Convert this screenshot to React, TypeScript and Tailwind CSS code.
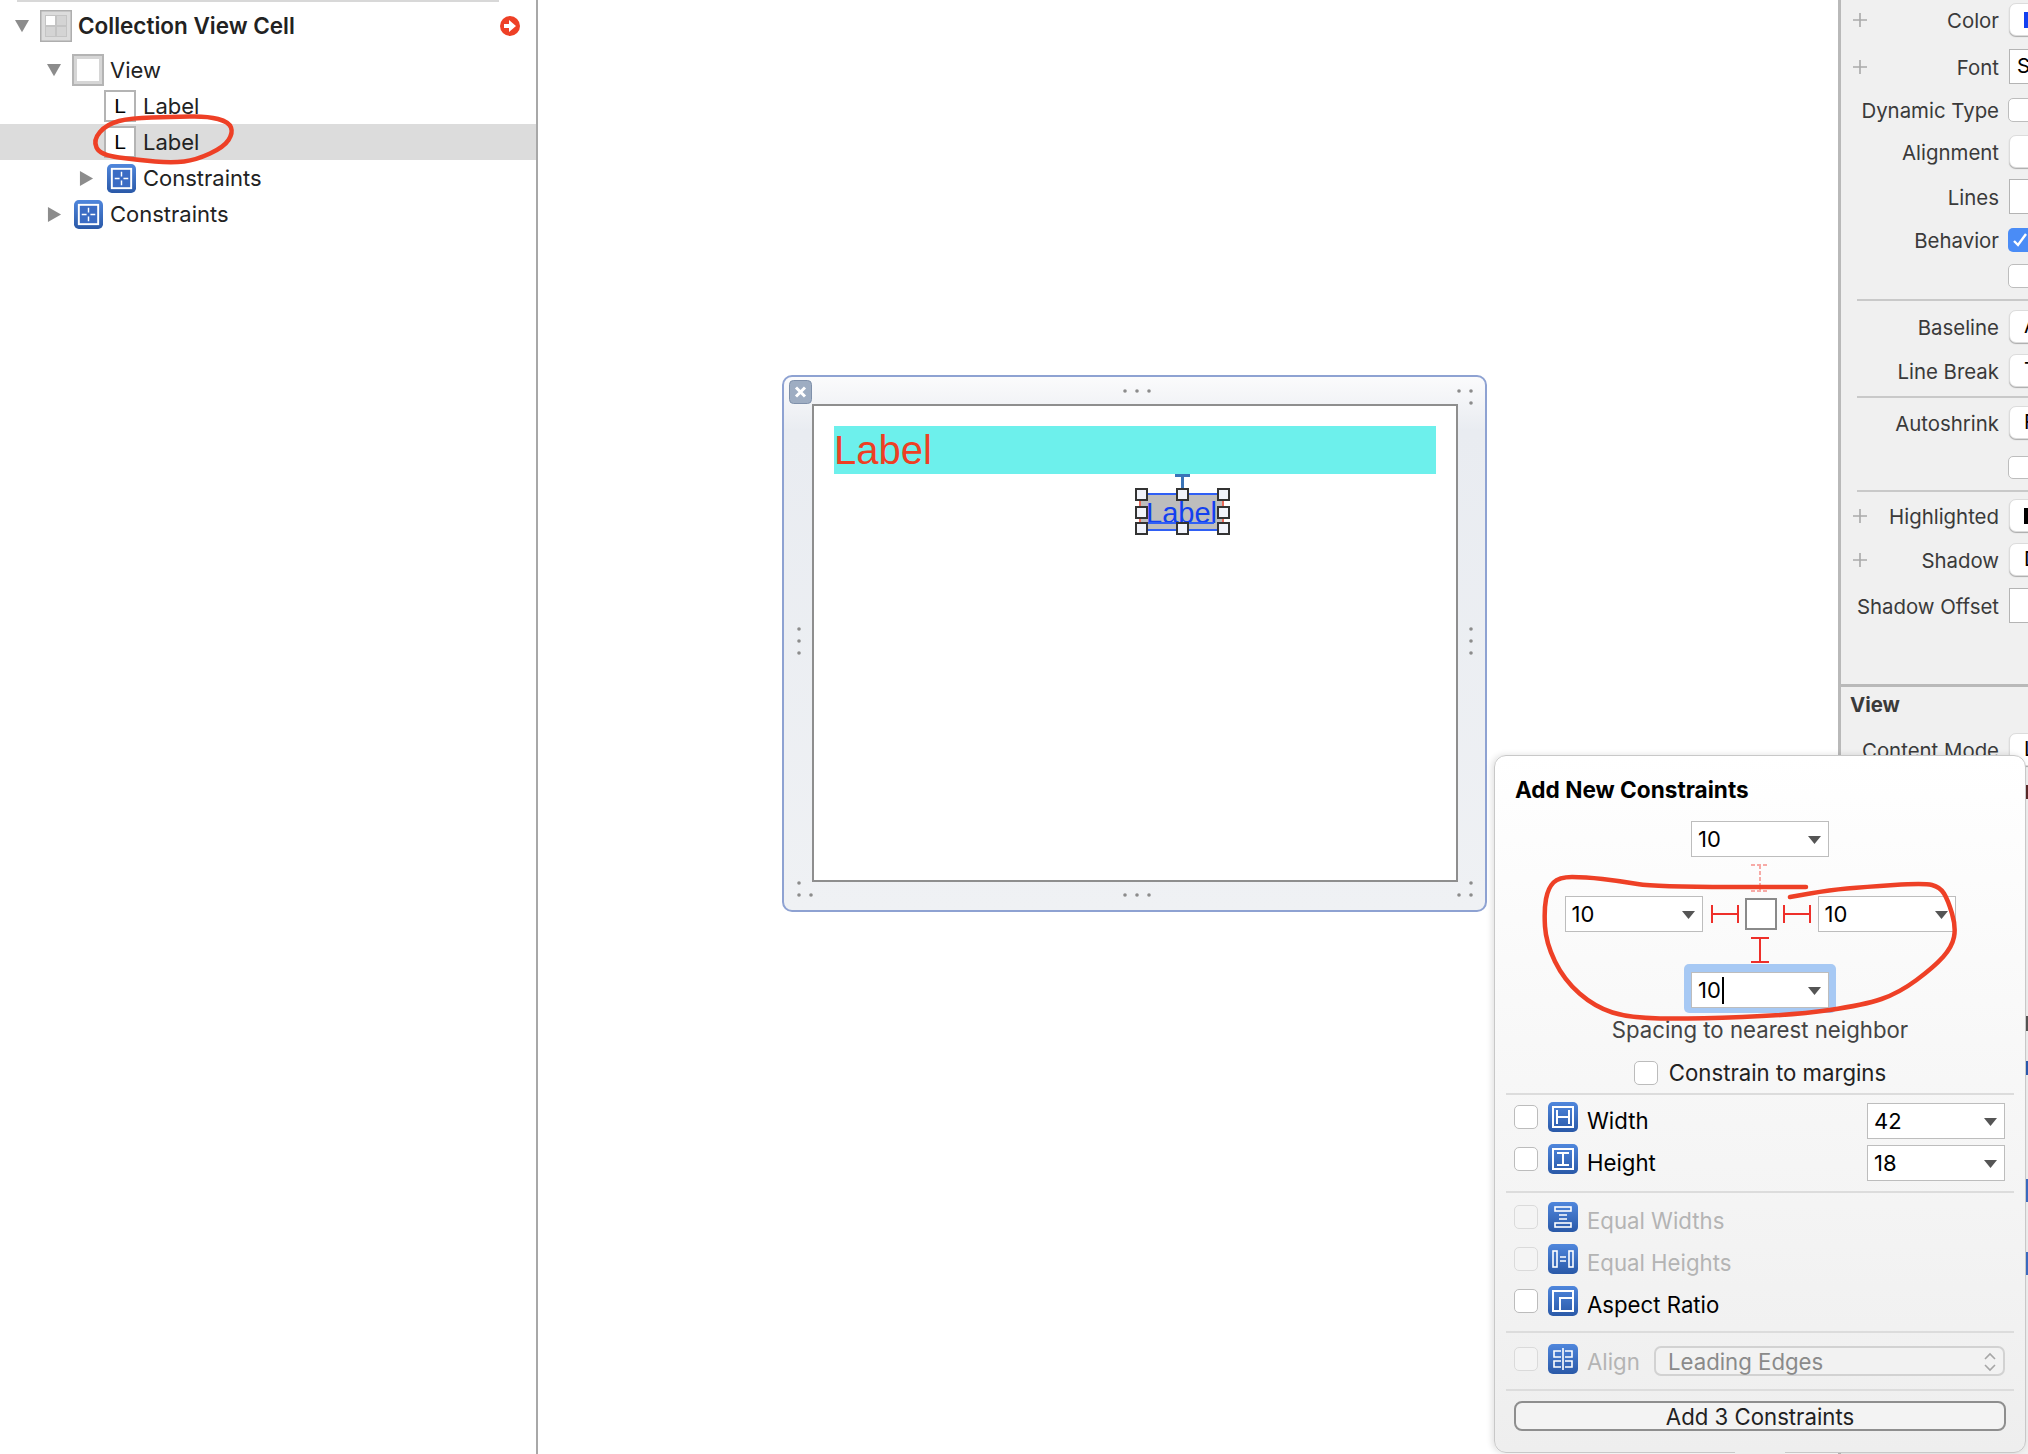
import type { ReactNode } from "react";

type Pt = [number, number];

// smooth hand drawn stroke through points
const scribble = (pts: Pt[], close = false) => {
  const mid = (a: Pt, b: Pt) => `${(a[0] + b[0]) / 2} ${(a[1] + b[1]) / 2}`;
  let d = close ? `M${mid(pts[pts.length - 1], pts[0])}` : `M${pts[0][0]} ${pts[0][1]}`;
  pts.forEach((p, i) => {
    const next = pts[i + 1] ?? (close ? pts[0] : p);
    d += ` Q${p[0]} ${p[1]} ${mid(p, next)}`;
  });
  return d;
};

const smallLoop: Pt[] = [
  [229, 122], [207, 116], [172, 117], [131, 118], [107, 124], [93, 140], [100, 155], [138, 160],
  [172, 163], [196, 160], [224, 147], [233, 133],
];

const bigLoop: Pt[] = [
  [1806, 887], [1655, 887], [1620, 881], [1585, 877], [1559, 877], [1548, 888], [1544, 910], [1546, 943],
  [1564, 980], [1595, 1007], [1630, 1018], [1690, 1019], [1795, 1015], [1864, 1005], [1899, 993],
  [1934, 967], [1952, 947], [1956, 927], [1948, 900], [1940, 887], [1924, 883], [1864, 887], [1830, 890],
  [1790, 897],
];

const Triangle = ({ open, className }: { open?: boolean; className: string }) => (
  <svg viewBox="0 0 16 16" className={className}>
    {open ? <polygon points="0,1 16,1 8,15" fill="#8c8c8c" /> : <polygon points="1,0 15,8 1,16" fill="#8c8c8c" />}
  </svg>
);

const BlueIcon = ({ children, className = "h-[30px] w-[30px]" }: { children: ReactNode; className?: string }) => (
  <svg viewBox="0 0 30 30" className={`shrink-0 ${className}`}>
    <defs>
      <linearGradient id="blueBox" x1="0" y1="0" x2="0" y2="1">
        <stop offset="0" stopColor="#4f86dc" />
        <stop offset="1" stopColor="#2a59a8" />
      </linearGradient>
    </defs>
    <rect x="0" y="0" width="30" height="30" rx="5" fill="url(#blueBox)" />
    <g fill="none" stroke="#fff" strokeWidth="2">{children}</g>
  </svg>
);

const ConstraintsGlyph = () => (
  <>
    <rect x="5" y="5" width="20" height="20" fill="#3b6cc4" />
    <path d="M15 8v5M15 17v5M8 15h5M17 15h5" strokeWidth="1.5" />
  </>
);

const TreeRow = ({ children, className = "" }: { children: ReactNode; className?: string }) => (
  <div className={`flex h-[36px] items-center ${className}`}>{children}</div>
);

const LabelIcon = () => (
  <div className="flex h-[32px] w-[32px] shrink-0 items-center justify-center border-2 border-[#b4b4b4] bg-white text-[21px] text-black font-['Liberation_Sans',sans-serif]">
    L
  </div>
);

const Outline = () => (
  <div className="relative h-full w-[538px] shrink-0 border-r-2 border-[#a8a8a8] bg-white text-[22px] text-[#222]">
    <div className="ml-[17px] h-[2px] w-[482px] bg-[#d8d8d8]" />
    <div className="flex h-[48px] items-center pl-[14px]">
      <Triangle open className="h-[14px] w-[16px]" />
      <svg viewBox="0 0 32 32" className="ml-[10px] h-[32px] w-[32px]">
        <rect x="0.75" y="0.75" width="30.5" height="30.5" fill="#dcdcdc" stroke="#aeaeae" strokeWidth="1.5" />
        <rect x="5.5" y="5.5" width="10" height="10" fill="#fff" stroke="#c4c4c4" />
        <rect x="16.5" y="5.5" width="10" height="10" fill="#d4d4d4" stroke="#c4c4c4" />
        <rect x="5.5" y="16.5" width="10" height="10" fill="#d4d4d4" stroke="#c4c4c4" />
        <rect x="16.5" y="16.5" width="10" height="10" fill="#d4d4d4" stroke="#c4c4c4" />
      </svg>
      <span className="ml-[6px] text-[22.5px] font-semibold">Collection View Cell</span>
      <svg viewBox="0 0 20 20" className="ml-auto mr-[16px] h-[20px] w-[20px]">
        <circle cx="10" cy="10" r="10" fill="#ee4026" />
        <path d="M4 8h5V4l7 6-7 6v-4H4z" fill="#fff" />
      </svg>
    </div>
    <TreeRow className="mt-[2px] pl-[46px]">
      <Triangle open className="h-[14px] w-[16px]" />
      <div className="ml-[10px] flex h-[32px] w-[32px] items-center justify-center border-2 border-[#b4b4b4] bg-[#d6d6d6]">
        <div className="h-[22px] w-[22px] bg-white" />
      </div>
      <span className="ml-[6px]">View</span>
    </TreeRow>
    <TreeRow className="pl-[104px]">
      <LabelIcon />
      <span className="ml-[7px]">Label</span>
    </TreeRow>
    <TreeRow className="bg-[#dcdcdc] pl-[104px]">
      <LabelIcon />
      <span className="ml-[7px]">Label</span>
    </TreeRow>
    <TreeRow className="pl-[79px]">
      <Triangle className="h-[17px] w-[15px]" />
      <BlueIcon className="ml-[13px] h-[29px] w-[29px]">
        <ConstraintsGlyph />
      </BlueIcon>
      <span className="ml-[7px]">Constraints</span>
    </TreeRow>
    <TreeRow className="pl-[47px]">
      <Triangle className="h-[17px] w-[15px]" />
      <BlueIcon className="ml-[12px] h-[29px] w-[29px]">
        <ConstraintsGlyph />
      </BlueIcon>
      <span className="ml-[7px]">Constraints</span>
    </TreeRow>
  </div>
);

const Handle = ({ className }: { className: string }) => (
  <div className={`absolute h-[13px] w-[13px] border-2 border-[#333] bg-[#f2f4fb] ${className}`} />
);

const gripDots: Pt[] = [
  [341, 14], [353, 14], [365, 14], [675, 14], [687, 14], [687, 26],
  [15, 252], [15, 264], [15, 276], [687, 252], [687, 264], [687, 276],
  [341, 518], [353, 518], [365, 518], [15, 518], [27, 518], [15, 506], [675, 518], [687, 518], [687, 506],
];

const CellCanvas = () => (
  <div className="h-full flex-1 bg-white pl-[244px] pt-[375px]">
    <div className="relative h-[537px] w-[705px] rounded-[10px] border-2 border-[#8ea2d2] bg-gradient-to-b from-[#fbfbfc] via-[#e9ecf1] via-10% to-[#eff1f4] pl-[28px] pt-[27px]">
      <svg className="absolute left-0 top-0 h-full w-full" viewBox="0 0 701 533">
        {gripDots.map(([x, y], i) => (
          <circle key={i} cx={x} cy={y} r="1.8" fill="#8c8c8c" />
        ))}
      </svg>
      <svg viewBox="0 0 23 24" className="absolute left-[5px] top-[3px] h-[24px] w-[23px]">
        <rect x="0.5" y="0.5" width="22" height="23" rx="4" fill="#9eadc2" stroke="#7f90aa" />
        <path d="M7 7.5l9 9M16 7.5l-9 9" stroke="#fff" strokeWidth="3" />
      </svg>
      <div className="relative h-[478px] w-[646px] border-2 border-[#8e8e8e] bg-white pl-[20px] pt-[20px]">
        <div className="flex h-[48px] w-[602px] items-center bg-[#6df0ec] text-[40px] text-[#ee3f24] font-['Liberation_Sans',sans-serif]">
          Label
        </div>
        <div className="relative ml-[305px] mt-[19px] flex h-[38px] w-[85px] items-center justify-center border-x-2 border-y-2 border-x-[#e9695a] border-y-[#2f5ff5] bg-[#bdbdbd] pt-[3px] text-[29px] leading-none text-[#1240f0] font-['Liberation_Sans',sans-serif]">
          Label
          <div className="absolute left-0 right-[8px] top-[27px] h-[2px] bg-[#2f5ff5]" />
          <div className="absolute left-[40px] top-[-21px] h-[19px] w-[3px] bg-[#3a74b8]" />
          <div className="absolute left-[34px] top-[-21px] h-[3px] w-[15px] bg-[#3a74b8]" />
          <Handle className="left-[-6px] top-[-7px]" />
          <Handle className="left-[35px] top-[-7px]" />
          <Handle className="left-[76px] top-[-7px]" />
          <Handle className="left-[-6px] top-[11px]" />
          <Handle className="left-[76px] top-[11px]" />
          <Handle className="left-[-6px] top-[27px]" />
          <Handle className="left-[35px] top-[27px]" />
          <Handle className="left-[76px] top-[27px]" />
        </div>
      </div>
    </div>
  </div>
);

const Plus = () => (
  <svg viewBox="0 0 14 14" className="absolute left-[12px] top-1/2 h-[14px] w-[14px] -translate-y-1/2">
    <path d="M7 0v14M0 7h14" stroke="#a9a9a9" strokeWidth="1.6" />
  </svg>
);

const InspectorRow = ({
  label,
  plus,
  className,
  children,
}: {
  label?: string;
  plus?: boolean;
  className: string;
  children: ReactNode;
}) => (
  <div className={`relative flex items-center ${className}`}>
    {plus && <Plus />}
    <div className="w-[158px] shrink-0 pt-[3px] text-right">{label}</div>
    <div className="ml-[10px] h-full w-[40px] shrink-0">{children}</div>
  </div>
);

const PopUp = ({ children }: { children?: ReactNode }) => (
  <div className="flex h-full items-center overflow-hidden rounded-l-[7px] border border-[#dcdcdc] bg-white pl-[14px] text-black shadow-[0_1px_1px_#aaa]">
    {children}
  </div>
);
const SquareInput = ({ children }: { children?: ReactNode }) => (
  <div className="flex h-full items-center border border-[#b4b4b4] bg-white pl-[7px] text-black">{children}</div>
);
const SideCheck = ({ on }: { on?: boolean }) =>
  on ? (
    <div className="-ml-px flex h-full items-center rounded-l-[5px] bg-[#4a8cf6] pl-[5px]">
      <svg viewBox="0 0 14 14" className="h-[14px] w-[14px]">
        <path d="M1 8l4 4 8-11" fill="none" stroke="#fff" strokeWidth="2.4" />
      </svg>
    </div>
  ) : (
    <div className="-ml-px h-full rounded-l-[5px] border border-[#bdbdbd] bg-white" />
  );
const Rule = ({ className }: { className: string }) => <div className={`ml-[16px] h-[2px] bg-[#c9c9c9] ${className}`} />;

const Inspector = () => (
  <div className="h-full w-[190px] shrink-0 overflow-hidden border-l-[3px] border-[#b9b9b9] bg-[#f0f0f0] text-[20.4px] text-[#3a3a3a]">
    <InspectorRow label="Color" plus className="mt-[3px] h-[33px]">
      <PopUp>
        <div className="h-[16px] w-[4px] bg-[#1240f0]" />
      </PopUp>
    </InspectorRow>
    <InspectorRow label="Font" plus className="mt-[13px] h-[35px]">
      <SquareInput>S</SquareInput>
    </InspectorRow>
    <InspectorRow label="Dynamic Type" className="mt-[14px] h-[24px]">
      <SideCheck />
    </InspectorRow>
    <InspectorRow label="Alignment" className="mt-[13px] h-[33px]">
      <PopUp />
    </InspectorRow>
    <InspectorRow label="Lines" className="mt-[11px] h-[35px]">
      <SquareInput />
    </InspectorRow>
    <InspectorRow label="Behavior" className="mt-[14px] h-[24px]">
      <SideCheck on />
    </InspectorRow>
    <InspectorRow className="mt-[12px] h-[24px]">
      <SideCheck />
    </InspectorRow>
    <Rule className="mt-[11px]" />
    <InspectorRow label="Baseline" className="mt-[9px] h-[33px]">
      <PopUp>A</PopUp>
    </InspectorRow>
    <InspectorRow label="Line Break" className="mt-[11px] h-[33px]">
      <PopUp>T</PopUp>
    </InspectorRow>
    <Rule className="mt-[9px]" />
    <InspectorRow label="Autoshrink" className="mt-[8px] h-[33px]">
      <PopUp>F</PopUp>
    </InspectorRow>
    <InspectorRow className="mt-[17px] h-[23px]">
      <SideCheck />
    </InspectorRow>
    <Rule className="mt-[11px]" />
    <InspectorRow label="Highlighted" plus className="mt-[7px] h-[33px]">
      <PopUp>
        <div className="h-[16px] w-[4px] bg-black" />
      </PopUp>
    </InspectorRow>
    <InspectorRow label="Shadow" plus className="mt-[11px] h-[33px]">
      <PopUp>D</PopUp>
    </InspectorRow>
    <InspectorRow label="Shadow Offset" className="mt-[12px] h-[35px]">
      <SquareInput />
    </InspectorRow>
    <div className="mt-[61px] h-[3px] bg-[#b9b9b9]" />
    <div className="ml-[9px] mt-[4px] h-[28px] font-bold leading-[28px]">View</div>
    <InspectorRow label="Content Mode" className="mt-[14px] h-[33px]">
      <PopUp>L</PopUp>
    </InspectorRow>
  </div>
);

const Combo = ({ value, caret }: { value: string; caret?: boolean }) => (
  <div className="relative flex h-[36px] w-[138px] shrink-0 items-center border border-[#bdbdbd] bg-white pl-[6px] pt-[1px] text-[22px] text-black">
    {value}
    {caret && <div className="ml-px h-[27px] w-[2px] bg-black" />}
    <svg viewBox="0 0 13 8" className="absolute right-[7px] top-[14px] h-[8px] w-[13px]">
      <polygon points="0,0 13,0 6.5,8" fill="#555" />
    </svg>
  </div>
);

const Check = ({ dim }: { dim?: boolean }) => (
  <div
    className={`h-[24px] w-[24px] shrink-0 rounded-[5px] border ${dim ? "border-[#dadada] bg-[#f4f4f4]" : "border-[#bcbcbc] bg-white"}`}
  />
);

const PopRule = ({ className }: { className: string }) => <div className={`mx-[11px] h-[2px] bg-[#dcdcdc] ${className}`} />;

const OptionRow = ({
  icon,
  label,
  dim,
  className,
  children,
}: {
  icon: ReactNode;
  label: string;
  dim?: boolean;
  className: string;
  children?: ReactNode;
}) => (
  <div className={`flex h-[30px] items-center pl-[19px] pr-[20px] ${className}`}>
    <Check dim={dim} />
    <BlueIcon className="ml-[10px] h-[30px] w-[30px]">{icon}</BlueIcon>
    <span className={`ml-[9px] mt-[7px] ${dim ? "text-[#b4b4b4]" : "text-black"}`}>{label}</span>
    {children}
  </div>
);

const Popover = () => (
  <div className="absolute left-[1494px] top-[755px] h-[698px] w-[532px] rounded-[12px] border border-[#c8c8c8] bg-gradient-to-b from-white to-[#eeeeee] text-[22.2px] shadow-[-2px_0_6px_rgba(0,0,0,0.12)]">
    <div className="pl-[20px] pt-[21px] text-[22.6px] font-bold leading-[26px] text-black">Add New Constraints</div>
    <div className="mt-[18px] flex justify-center">
      <Combo value="10" />
    </div>
    <div className="flex h-[39px] justify-center pt-[7px]">
      <svg viewBox="0 0 18 28" className="h-[28px] w-[18px]">
        <path d="M0 1h18M0 27h18M9 1v26" fill="none" stroke="#f7aaa6" strokeWidth="2" strokeDasharray="4 2" />
      </svg>
    </div>
    <div className="flex h-[36px] items-center justify-center">
      <Combo value="10" />
      <svg viewBox="0 0 28 18" className="ml-[8px] h-[18px] w-[28px]">
        <path d="M1 0v18M27 0v18M1 9h26" fill="none" stroke="#ee2f2a" strokeWidth="2" />
      </svg>
      <div className="ml-[6px] h-[32px] w-[32px] border-2 border-[#8a8a8a] bg-white" />
      <svg viewBox="0 0 28 18" className="ml-[6px] h-[18px] w-[28px]">
        <path d="M1 0v18M27 0v18M1 9h26" fill="none" stroke="#ee2f2a" strokeWidth="2" />
      </svg>
      <div className="ml-[7px]">
        <Combo value="10" />
      </div>
    </div>
    <div className="flex h-[32px] justify-center pt-[5px]">
      <svg viewBox="0 0 18 26" className="h-[26px] w-[18px]">
        <path d="M0 1h18M0 25h18M9 1v24" fill="none" stroke="#ee2f2a" strokeWidth="2" />
      </svg>
    </div>
    <div className="flex justify-center">
      <div className="rounded-[5px] bg-[#a7c9f4] px-[7px] pb-[5px] pt-[8px]">
        <Combo value="10" caret />
      </div>
    </div>
    <div className="mt-[4px] h-[26px] text-center leading-[26px] text-[#444]">Spacing to nearest neighbor</div>
    <div className="mt-[18px] flex h-[24px] items-center justify-center">
      <Check />
      <span className="ml-[11px] text-[#222]">Constrain to margins</span>
    </div>
    <PopRule className="mt-[8px]" />
    <OptionRow
      className="mt-[7px]"
      label="Width"
      icon={
        <>
          <rect x="5" y="5" width="20" height="20" />
          <path d="M9 8v14M21 8v14M9 15h12" />
        </>
      }
    >
      <div className="ml-auto mt-[8px]">
        <Combo value="42" />
      </div>
    </OptionRow>
    <OptionRow
      className="mt-[12px]"
      label="Height"
      icon={
        <>
          <rect x="5" y="5" width="20" height="20" />
          <path d="M9 9h12M9 21h12M15 9v12" />
        </>
      }
    >
      <div className="ml-auto mt-[8px]">
        <Combo value="18" />
      </div>
    </OptionRow>
    <PopRule className="mt-[17px]" />
    <OptionRow
      className="mt-[9px]"
      dim
      label="Equal Widths"
      icon={
        <>
          <rect x="7" y="5" width="16" height="4" strokeWidth="1.6" />
          <rect x="7" y="21" width="16" height="4" strokeWidth="1.6" />
          <path d="M11 13h8M11 17h8" strokeWidth="1.6" />
        </>
      }
    />
    <OptionRow
      className="mt-[12px]"
      dim
      label="Equal Heights"
      icon={
        <>
          <rect x="5" y="7" width="4" height="16" strokeWidth="1.6" />
          <rect x="21" y="7" width="4" height="16" strokeWidth="1.6" />
          <path d="M12 13h6M12 17h6" strokeWidth="1.6" />
        </>
      }
    />
    <OptionRow
      className="mt-[12px]"
      label="Aspect Ratio"
      icon={
        <>
          <rect x="5" y="5" width="20" height="20" />
          <path d="M12 25V12h13" />
        </>
      }
    />
    <PopRule className="mt-[15px]" />
    <div className="mt-[11px] flex h-[30px] items-center pl-[19px] pr-[20px]">
      <Check dim />
      <BlueIcon className="ml-[10px] h-[30px] w-[30px]">
        <path d="M15 4v22M13 7H6v6h7M13 17H6v6h7M17 7h7v6h-7M17 17h7v6h-7" strokeWidth="1.6" />
      </BlueIcon>
      <span className="ml-[9px] mt-[6px] text-[#b4b4b4]">Align</span>
      <div className="ml-auto mt-[3px] flex h-[30px] w-[351px] items-center rounded-[7px] border-2 border-[#d2d2d2] bg-[#f2f2f2] pl-[12px] pt-[2px] text-[#8a8a8a]">
        Leading Edges
        <svg viewBox="0 0 12 20" className="ml-auto mr-[7px] h-[20px] w-[12px]">
          <path d="M1 7l5-5 5 5M1 13l5 5 5-5" fill="none" stroke="#a6a6a6" strokeWidth="1.6" />
        </svg>
      </div>
    </div>
    <PopRule className="mt-[15px]" />
    <div className="mx-[19px] mt-[10px] flex h-[30px] items-center justify-center rounded-[8px] border-2 border-[#8e8e8e] bg-[#f3f3f3] pt-px text-[#222]">
      Add 3 Constraints
    </div>
    <div className="absolute bottom-[-2px] left-[240px] h-[3px] w-[50px] bg-[#eeeeee]" />
  </div>
);

export default function App() {
  return (
    <div className="relative flex h-[1454px] w-[2028px] overflow-hidden bg-white font-['Inter',sans-serif]">
      <Outline />
      <CellCanvas />
      <Inspector />
      {/* bits of the inspector that peek out right of the popover */}
      <div className="absolute right-0 top-[785px] h-[14px] w-[2px] bg-[#5a2a2a]" />
      <div className="absolute right-0 top-[1016px] h-[15px] w-[2px] bg-[#555]" />
      <div className="absolute right-0 top-[1061px] h-[14px] w-[2px] bg-[#2a5ab0]" />
      <div className="absolute right-0 top-[1179px] h-[23px] w-[2px] bg-[#3b6cc4]" />
      <div className="absolute right-0 top-[1252px] h-[23px] w-[2px] bg-[#3b6cc4]" />
      <Popover />
      <svg viewBox="0 0 2028 1454" className="pointer-events-none absolute left-0 top-0 h-[1454px] w-[2028px]">
        <path d={scribble(smallLoop, true)} fill="none" stroke="#ee4026" strokeWidth="4.5" strokeLinecap="round" />
        <path d={scribble(bigLoop)} fill="none" stroke="#ee4026" strokeWidth="4.5" strokeLinecap="round" />
      </svg>
    </div>
  );
}
